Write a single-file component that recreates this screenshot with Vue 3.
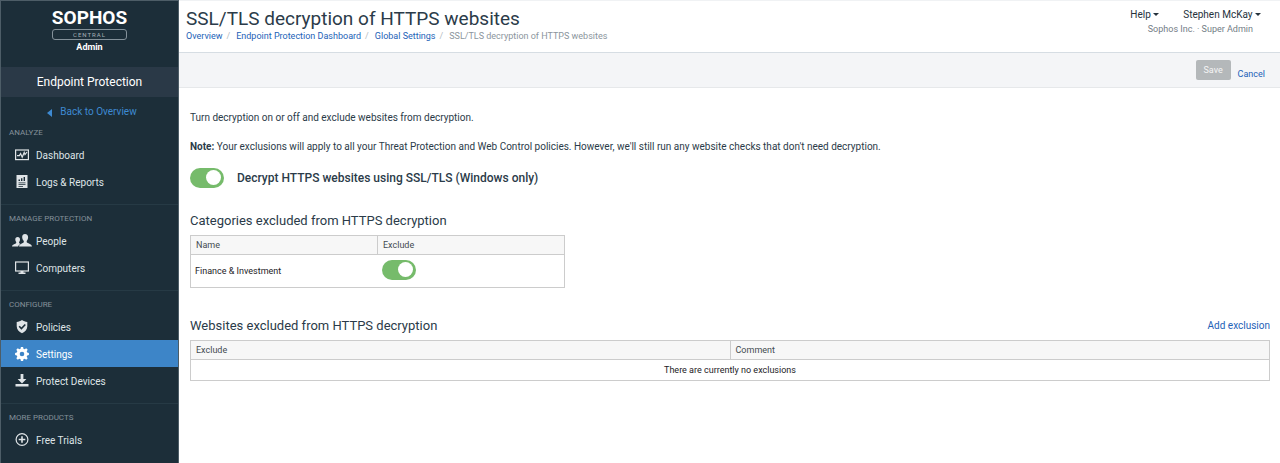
<template>
  <div class="app">
    <aside class="sidebar">
      <div class="brand">
        <div class="brand-name">SOPHOS</div>
        <div class="brand-central">CENTRAL</div>
        <div class="brand-admin">Admin</div>
      </div>
      <div class="product">Endpoint Protection</div>
      <a class="back" href="#">
        <svg width="5" height="8" viewBox="0 0 5 8"><path d="M5 0v8L0 4z" /></svg>
        <span>Back to Overview</span>
      </a>
      <nav>
        <section v-for="group in menu" :key="group.title" class="group">
          <h2>{{ group.title }}</h2>
          <a
            v-for="item in group.items"
            :key="item.name"
            href="#"
            class="item"
            :class="{ active: item.name === current }"
            @click.prevent="current = item.name"
          >
            <svg class="icon" width="20" height="16" viewBox="0 0 20 16">
              <template v-if="item.icon === 'dashboard'">
                <rect x="3.6" y="3" width="12.8" height="9.6" class="line" />
                <path d="M5 8.6h2.4l1.2-2 1.6 3.6 2-4.8.8 2.2L15 5" class="line" />
              </template>
              <template v-else-if="item.icon === 'logs'">
                <path d="M4.5 1h11v13h-11z" />
                <path
                  d="M6.5 7V5.500H8V7zM9 7V4.200h1.400V7zM11.600 7V3h1.400v4zM6.500 8.400h7v.8h-7zM6.500 10.200h7v.8h-7zM6.500 12h4.500v.8H6.500z"
                  class="cut"
                />
              </template>
              <template v-else-if="item.icon === 'people'">
                <path
                  d="M13 1c2 0 3.2 1.4 3.1 3.6-.1 1.6-.7 2.6-1.4 3.3v1.3c.6 1 4.8 1.4 5.3 4.3H7c.4-2.9 4.3-3.3 4.8-4.3V7.9c-.8-.7-1.500-1.700-1.600-3.300C10 2.400 11 1 13 1z"
                />
                <path
                  d="M5.7 4c1.5 0 2.4 1 2.3 2.700 0 1-.4 1.800-.9 2.300v1c.2.4.8.6 1.400.9-1.200.6-2.100 1.300-2.400 2.600H0c.3-2.300 3.700-2.500 4.200-3.500V9c-.5-.5-.9-1.200-.9-2.300C3.200 5 4.100 4 5.700 4z"
                />
              </template>
              <template v-else-if="item.icon === 'computer'">
                <rect x="3.6" y="2" width="12.8" height="9" class="line" />
                <path d="M8.5 11h3v1.600h2V14h-7v-1.400h2z" />
              </template>
              <template v-else-if="item.icon === 'shield'">
                <path d="M10 1c1.5 1.2 3.4 1.8 5.300 1.900v4.300c0 3.300-2.300 5.700-5.300 7-3-1.300-5.300-3.700-5.300-7V2.900C6.600 2.800 8.500 2.200 10 1z" />
                <path d="M7.200 7.300l2.200 2.200 3.900-4" class="check" />
              </template>
              <template v-else-if="item.icon === 'gear'">
                <path
                  d="M8.900 1h2.200l.3 1.800 1.300.5 1.500-1 1.500 1.500-1 1.500.5 1.300 1.700.3v2.200l-1.700.3-.5 1.300 1 1.500-1.500 1.500-1.500-1-1.300.5-.3 1.800H8.900l-.3-1.800-1.300-.5-1.500 1-1.500-1.500 1-1.500-.5-1.300-1.700-.3V6.900l1.700-.3.5-1.300-1-1.500 1.500-1.500 1.500 1 1.300-.5zM10 5.700a2.300 2.300 0 1 0 0 4.600 2.300 2.300 0 0 0 0-4.600z"
                  fill-rule="evenodd"
                />
              </template>
              <template v-else-if="item.icon === 'download'">
                <path d="M8.600 1h2.800v5h3L10 10.500 5.600 6h3zM3.500 11h13v2.600h-13z" />
              </template>
              <template v-else>
                <circle cx="10" cy="7.5" r="5.900" class="line" />
                <path d="M9.200 4.200h1.600v2.500h2.500v1.600h-2.500v2.500H9.200V8.300H6.700V6.700h2.500z" />
              </template>
            </svg>
            <span>{{ item.name }}</span>
          </a>
        </section>
      </nav>
    </aside>

    <main class="main">
      <header class="header">
        <div>
          <h1>SSL/TLS decryption of HTTPS websites</h1>
          <ol class="crumbs">
            <li v-for="crumb in crumbs" :key="crumb"><a href="#">{{ crumb }}</a></li>
            <li>SSL/TLS decryption of HTTPS websites</li>
          </ol>
        </div>
        <div class="account">
          <div class="account-menus">
            <button type="button">Help <i class="caret"></i></button>
            <button type="button">Stephen McKay <i class="caret"></i></button>
          </div>
          <div class="account-role">Sophos Inc. · Super Admin</div>
        </div>
      </header>

      <div class="toolbar">
        <button type="button" class="save" disabled>Save</button>
        <a href="#">Cancel</a>
      </div>

      <div class="content">
        <p>Turn decryption on or off and exclude websites from decryption.</p>
        <p>
          <b>Note:</b> Your exclusions will apply to all your Threat Protection and Web Control
          policies. However, we'll still run any website checks that don't need decryption.
        </p>
        <label class="decrypt">
          <input v-model="decrypt" type="checkbox" class="switch" />
          <span>Decrypt HTTPS websites using SSL/TLS (Windows only)</span>
        </label>

        <h3>Categories excluded from HTTPS decryption</h3>
        <table class="categories">
          <thead>
            <tr>
              <th>Name</th>
              <th>Exclude</th>
            </tr>
          </thead>
          <tbody>
            <tr v-for="category in categories" :key="category.name">
              <td>{{ category.name }}</td>
              <td>
                <input
                  v-model="category.exclude"
                  type="checkbox"
                  class="switch"
                  :aria-label="category.name"
                />
              </td>
            </tr>
          </tbody>
        </table>

        <div class="websites-title">
          <h3>Websites excluded from HTTPS decryption</h3>
          <a href="#">Add exclusion</a>
        </div>
        <table class="websites">
          <thead>
            <tr>
              <th>Exclude</th>
              <th>Comment</th>
            </tr>
          </thead>
          <tbody>
            <tr>
              <td colspan="2">There are currently no exclusions</td>
            </tr>
          </tbody>
        </table>
      </div>
    </main>
  </div>
</template>

<script setup>
import { ref } from "vue";

const current = ref("Settings");
const decrypt = ref(true);
const categories = ref([{ name: "Finance & Investment", exclude: true }]);

const crumbs = ["Overview", "Endpoint Protection Dashboard", "Global Settings"];

const menu = [
  {
    title: "ANALYZE",
    items: [
      { name: "Dashboard", icon: "dashboard" },
      { name: "Logs & Reports", icon: "logs" },
    ],
  },
  {
    title: "MANAGE PROTECTION",
    items: [
      { name: "People", icon: "people" },
      { name: "Computers", icon: "computer" },
    ],
  },
  {
    title: "CONFIGURE",
    items: [
      { name: "Policies", icon: "shield" },
      { name: "Settings", icon: "gear" },
      { name: "Protect Devices", icon: "download" },
    ],
  },
  {
    title: "MORE PRODUCTS",
    items: [{ name: "Free Trials", icon: "plus" }],
  },
];
</script>

<style>
body {
  margin: 0;
  background: #fff;
}
</style>

<style scoped>
.app {
  display: flex;
  min-height: 100vh;
  font-family: Roboto, "Liberation Sans", sans-serif;
  font-size: 10px;
  line-height: 16px;
  color: #2b3b49;
}
a {
  color: #2362b7;
  text-decoration: none;
}
h1,
h2,
h3,
p {
  margin: 0;
  font-weight: 400;
}
button {
  font: inherit;
  border: 0;
  padding: 0;
  background: none;
}

/* sidebar */
.sidebar {
  flex: none;
  width: 177px;
  border: 1px solid #4d5d67;
  border-bottom: 0;
  background: #1c2e39;
  color: #dfe4e7;
}
.brand {
  display: flex;
  flex-direction: column;
  align-items: center;
  height: 58px;
  padding-top: 8px;
  color: #fff;
}
.brand-name {
  font-size: 19px;
  font-weight: 700;
  line-height: 18px;
}
.brand-central {
  width: 73px;
  margin-top: 2px;
  border: 1px solid #84919a;
  border-radius: 3px;
  font-size: 6px;
  line-height: 9px;
  letter-spacing: 1px;
  text-align: center;
  color: #a5afb6;
}
.brand-admin {
  font-size: 9px;
  font-weight: 700;
  line-height: 14px;
}
.product {
  height: 30px;
  background: #2a3947;
  color: #fff;
  font-size: 12px;
  line-height: 30px;
  text-align: center;
}
.back {
  display: flex;
  justify-content: center;
  align-items: center;
  gap: 8px;
  height: 21px;
  padding: 4px 0 0 5px;
  font-size: 10px;
  color: #3e8ad2;
}
.back svg {
  fill: #3e8ad2;
  margin-top: 3px;
}
.group {
  padding: 6px 0 9px;
  border-top: 1px solid #263a45;
}
.group:first-child {
  border-top-color: transparent;
  margin-top: -4px;
}
.group h2 {
  padding-left: 8px;
  font-size: 8px;
  line-height: 16px;
  color: #84919a;
}
.item {
  display: flex;
  align-items: center;
  gap: 4px;
  height: 27px;
  padding-left: 11px;
  color: #dfe4e7;
}
.item span {
  padding-top: 2px;
}
.item.active {
  background: #3d85c8;
  color: #fff;
}
.icon {
  fill: currentColor;
}
.icon .line {
  fill: none;
  stroke: currentColor;
  stroke-width: 1.2;
}
.icon .cut {
  fill: #1c2e39;
}
.icon .check {
  fill: none;
  stroke: #1c2e39;
  stroke-width: 1.6;
}

/* header */
.main {
  flex: 1;
  min-width: 0;
}
.header {
  display: flex;
  justify-content: space-between;
  height: 44px;
  padding: 7px 19px 0 7px;
  border-top: 1px solid #f0f2f4;
  border-bottom: 1px solid #d6dde3;
}
h1 {
  font-size: 19px;
  line-height: 21px;
}
.crumbs {
  display: flex;
  margin: 0;
  padding: 0;
  list-style: none;
  font-size: 9px;
  line-height: 14px;
  color: #8b959d;
}
.crumbs li + li::before {
  content: "/";
  padding: 0 6px 0 4px;
  color: #b5bcc2;
}
.account-menus {
  display: flex;
  justify-content: flex-end;
  gap: 24px;
  font-size: 10px;
  line-height: 14px;
}
.account-menus button {
  color: #26323c;
}
.caret {
  display: inline-block;
  margin-bottom: 2px;
  border: 3px solid transparent;
  border-top-color: #26323c;
  border-bottom: 0;
}
.account-role {
  padding-right: 8px;
  text-align: right;
  font-size: 9px;
  line-height: 14px;
  color: #737d86;
}
.toolbar {
  display: flex;
  justify-content: flex-end;
  align-items: center;
  gap: 7px;
  height: 34px;
  padding-right: 15px;
  border-bottom: 1px solid #e6e8ea;
  background: #f4f5f7;
  font-size: 9px;
}
.save {
  width: 35px;
  height: 20px;
  border-radius: 2px;
  background: #b4b8ba;
  color: #f4f5f5;
}
.toolbar a {
  margin-top: 8px;
}

/* content */
.content {
  padding: 22px 10px 0 11px;
}
.content p {
  font-size: 10px;
  margin-bottom: 13px;
}
.decrypt {
  display: flex;
  align-items: center;
  gap: 13px;
  font-size: 12px;
  font-weight: 500;
}
.switch {
  appearance: none;
  flex: none;
  display: block;
  width: 34px;
  height: 20px;
  margin: 0;
  padding: 2px 3px;
  box-sizing: border-box;
  border-radius: 10px;
  background: #bcc3c8;
}
.switch::before {
  content: "";
  display: block;
  width: 15px;
  height: 15px;
  border-radius: 50%;
  background: #fff;
}
.switch:checked {
  background: #76bb6b;
}
.switch:checked::before {
  margin-left: auto;
}
h3 {
  font-size: 13px;
  line-height: 18px;
}
.decrypt + h3 {
  margin-top: 24px;
}
table {
  width: 100%;
  margin-top: 5px;
  border-collapse: collapse;
  table-layout: fixed;
  border: 1px solid #ccc;
  font-size: 9px;
  line-height: 14px;
}
.categories {
  width: 375px;
}
th {
  height: 18px;
  padding: 0 5px;
  border: 1px solid #ccc;
  background: #f7f7f7;
  font-weight: 400;
  text-align: left;
  color: #444b51;
}
td {
  padding: 0 4px;
  color: #1d2226;
}
.categories td {
  height: 32px;
}
.categories .switch {
  margin-bottom: 2px;
}
.websites td {
  height: 20px;
  text-align: center;
}
.websites-title {
  display: flex;
  justify-content: space-between;
  align-items: center;
  margin-top: 29px;
}
.websites-title a {
  font-size: 10px;
}
</style>
